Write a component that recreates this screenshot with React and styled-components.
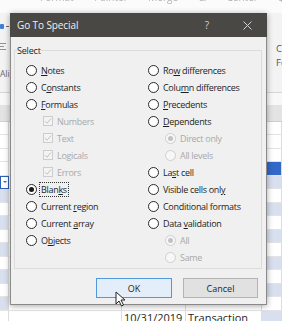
import React from "react";
import styled, { createGlobalStyle } from "styled-components";

const Global = createGlobalStyle`
  html, body { margin: 0; padding: 0; }
  body {
    width: 282px; height: 321px; overflow: hidden; background: #fff;
    font-family: "Open Sans", "Noto Sans", sans-serif;
  }
`;

const tones = {
  white: "#ffffff",
  light: "#d8dfee",
  blue: "#3268c8",
  gray: "#e4e4e4",
};

const Page = styled.div`
  position: relative;
  width: 282px;
  height: 321px;
  overflow: hidden;
  background: #fff;
  display: flex;
  flex-direction: column;
`;

/* ---------- Excel background ---------- */
const TopStrip = styled.div`
  height: 13px;
  flex: none;
  background: #fbfbfb;
  overflow: hidden;
`;
const TopText = styled.div`
  margin-top: -9px;
  padding-left: 40px;
  font-size: 10px;
  line-height: 12px;
  color: #b4b4b4;
  white-space: nowrap;
  word-spacing: 18px;
  filter: blur(0.6px);
`;
const Ribbon = styled.div`
  height: 79px;
  flex: none;
  background: #f3f3f3;
  border-bottom: 1px solid #d6d6d6;
  display: flex;
  justify-content: space-between;
  overflow: hidden;
`;
const RibbonLeft = styled.div`
  width: 10px;
  display: flex;
  flex-direction: column;
  padding-top: 9px;
`;
const BlueIcon = styled.div`
  display: flex;
  align-items: center;
  gap: 2px;
  height: 8px;
`;
const BlueTri = styled.div`
  width: 4px;
  height: 5px;
  background: #3f7fd3;
  border-radius: 1px;
`;
const Dash = styled.div`
  width: 3px;
  height: 1px;
  background: #666;
`;
const AlignLines = styled.div`
  margin-top: 13px;
  display: flex;
  flex-direction: column;
  gap: 2px;
  opacity: 0.7;
`;
const AlignLine = styled.div`
  width: ${(p) => p.$w}px;
  height: 1px;
  background: #6a6a6a;
`;
const RibbonLabel = styled.div`
  font-size: 8.5px;
  color: #6a6a6a;
  white-space: nowrap;
  margin-top: ${(p) => p.$mt}px;
  line-height: 11px;
`;
const RibbonRight = styled.div`
  width: 6px;
  display: flex;
  flex-direction: column;
  padding-top: 29px;
  overflow: hidden;
`;
const RibbonRightText = styled.div`
  font-size: 9.5px;
  color: #555;
  line-height: 14px;
  white-space: nowrap;
`;
const FormulaStrip = styled.div`
  height: 12px;
  flex: none;
  background: #f8f8f8;
`;
const HeaderRow = styled.div`
  height: 16.5px;
  flex: none;
  background: #e3e3e3;
  border-bottom: 1px solid #cfcfcf;
  box-sizing: border-box;
`;
const Row = styled.div`
  display: flex;
  height: 13.5px;
  flex: none;
`;
const Cell = styled.div`
  flex: ${(p) => (p.$grow ? "1 1 auto" : `0 0 ${p.$w}px`)};
  box-sizing: border-box;
  background: ${(p) => tones[p.$tone || "white"]};
  border-right: 1px solid #dcdcdc;
  border-bottom: 1px solid #e4e4e4;
  font-size: 11px;
  line-height: 14px;
  color: #1f1f1f;
  padding-left: 2px;
  white-space: nowrap;
  overflow: hidden;
`;
const SelCell = styled.div`
  flex: 0 0 9px;
  box-sizing: border-box;
  border: 1.5px solid #2d5fb5;
  background: #fff;
  display: flex;
  align-items: center;
  justify-content: flex-end;
`;
const DropTri = styled.div`
  width: 0;
  height: 0;
  border-left: 2px solid transparent;
  border-right: 2px solid transparent;
  border-top: 2px solid #666;
  margin-right: 1px;
`;

/* ---------- Dialog ---------- */
const Dialog = styled.div`
  position: absolute;
  left: 10px;
  top: 13px;
  width: 257px;
  height: 292px;
  box-sizing: border-box;
  background: #f0f0f0;
  border: 1px solid #8a8a8a;
  border-top: none;
  box-shadow: 0 1px 6px rgba(0, 0, 0, 0.35);
  display: flex;
  flex-direction: column;
`;
const TitleBar = styled.div`
  height: 24px;
  flex: none;
  margin: 0 -1px;
  background: #4a4845;
  color: #f0f0f0;
  display: flex;
  align-items: center;
`;
const Title = styled.div`
  flex: 1;
  padding-left: 7px;
  font-size: 10px;
  letter-spacing: -0.1px;
`;
const TitleButton = styled.div`
  width: 40px;
  height: 24px;
  display: flex;
  align-items: center;
  justify-content: center;
  font-size: 10px;
  color: #cfcfcf;
`;
const Body = styled.div`
  flex: 1;
  display: flex;
  flex-direction: column;
  padding: 6.5px 4px 6px 3px;
`;
const Group = styled.fieldset`
  margin: 0;
  padding: 0 3px 2px 2px;
  border: 1px solid #dcdcdc;
  min-width: 0;
`;
const Legend = styled.legend`
  padding: 0;
  font-size: 9px;
  line-height: 13px;
  color: #1e1e1e;
  letter-spacing: -0.2px;
`;
const Columns = styled.div`
  margin-top: 5px;
  padding-left: 9px;
  display: grid;
  grid-template-columns: 122px 1fr;
`;
const Column = styled.div`
  display: flex;
  flex-direction: column;
`;
const Option = styled.div`
  height: 17px;
  display: flex;
  align-items: center;
  gap: 4px;
  padding-left: ${(p) => (p.$indent ? 17 : 0)}px;
`;
const Radio = styled.div`
  width: 11px;
  height: 11px;
  box-sizing: border-box;
  border-radius: 50%;
  border: 1px solid ${(p) => (p.$disabled ? "#cfcfcf" : "#2a2a2a")};
  background: ${(p) => (p.$disabled ? "#f7f7f7" : "#fff")};
  display: flex;
  align-items: center;
  justify-content: center;
  flex: none;
  &::after {
    content: "";
    display: ${(p) => (p.$checked ? "block" : "none")};
    width: 5px;
    height: 5px;
    border-radius: 50%;
    background: ${(p) => (p.$disabled ? "#c2c2c2" : "#1a1a1a")};
  }
`;
const Check = styled.div`
  width: 10px;
  height: 10px;
  box-sizing: border-box;
  border: 1px solid #cdcdcd;
  background: #f3f3f3;
  display: flex;
  align-items: center;
  justify-content: center;
  flex: none;
`;
const Label = styled.span`
  font-size: 9px;
  letter-spacing: -0.3px;
  line-height: 11px;
  white-space: nowrap;
  color: ${(p) => (p.$disabled ? "#a9a9a9" : "#1e1e1e")};
  outline: ${(p) => (p.$focus ? "1px dotted #333" : "none")};
  outline-offset: 1px;
  & u {
    text-decoration: underline;
    text-underline-offset: 1px;
  }
`;
const Buttons = styled.div`
  margin-top: 9.5px;
  display: flex;
  justify-content: flex-end;
  gap: 11px;
  padding-right: 4px;
`;
const Button = styled.div`
  width: ${(p) => p.$w}px;
  height: 20px;
  box-sizing: border-box;
  display: flex;
  align-items: center;
  justify-content: center;
  font-size: 9px;
  color: #1e1e1e;
  background: ${(p) => (p.$default ? "#e3eefa" : "#e1e1e1")};
  border: 1px solid ${(p) => (p.$default ? "#4f98dc" : "#b4b4b4")};
`;
const Cursor = styled.svg`
  position: absolute;
  left: 115px;
  top: 291px;
`;

const Accel = ({ text, at }) => {
  if (at == null || at < 0) return text;
  return (
    <>
      {text.slice(0, at)}
      <u>{text[at]}</u>
      {text.slice(at + 1)}
    </>
  );
};

const left = [
  { t: "Notes", u: 0 },
  { t: "Constants", u: 1 },
  { t: "Formulas", u: 0 },
  { t: "Numbers", kind: "check", sub: true },
  { t: "Text", kind: "check", sub: true },
  { t: "Logicals", kind: "check", sub: true },
  { t: "Errors", kind: "check", sub: true },
  { t: "Blanks", u: 4, checked: true, focus: true },
  { t: "Current region", u: 8 },
  { t: "Current array", u: 8 },
  { t: "Objects", u: 1 },
];
const right = [
  { t: "Row differences", u: 2 },
  { t: "Column differences", u: 4 },
  { t: "Precedents", u: 0 },
  { t: "Dependents", u: 0 },
  { t: "Direct only", sub: true, checked: true },
  { t: "All levels", sub: true },
  { t: "Last cell", u: 2 },
  { t: "Visible cells only", u: 17 },
  { t: "Conditional formats" },
  { t: "Data validation", u: 5 },
  { t: "All", sub: true, checked: true },
  { t: "Same", sub: true },
];

const OptionItem = ({ o }) => (
  <Option $indent={o.sub}>
    {o.kind === "check" ? (
      <Check>
        <svg width="8" height="8" viewBox="0 0 8 8">
          <path d="M1 4.2 L3 6.2 L7 1.6" fill="none" stroke="#c2c2c2" strokeWidth="1" />
        </svg>
      </Check>
    ) : (
      <Radio $checked={o.checked} $disabled={o.sub} />
    )}
    <Label $disabled={o.sub} $focus={o.focus}>
      <Accel text={o.t} at={o.u} />
    </Label>
  </Option>
);

// [leftTone, rightTone, leftSelected]
const rows = [
  ["white", "white"],
  ["white", "white"],
  ["white", "white"],
  ["white", "blue"],
  ["white", "light", true],
  ["light", "white"],
  ["white", "light"],
  ["light", "white"],
  ["white", "light"],
  ["light", "white"],
  ["white", "light"],
  ["light", "white"],
  ["white", "light"],
  ["light", "white"],
];

export default function App() {
  return (
    <Page>
      <Global />
      <TopStrip>
        <TopText>Format Painter Merge &amp; Center $ % , Formatting Table Styles</TopText>
      </TopStrip>
      <Ribbon>
        <RibbonLeft>
          <BlueIcon>
            <BlueTri />
            <Dash />
          </BlueIcon>
          <AlignLines>
            <AlignLine $w={6} />
            <AlignLine $w={4} />
            <AlignLine $w={6} />
          </AlignLines>
          <RibbonLabel $mt={18}>Alig</RibbonLabel>
        </RibbonLeft>
        <RibbonRight>
          <RibbonRightText>Co</RibbonRightText>
          <RibbonRightText>Fo</RibbonRightText>
        </RibbonRight>
      </Ribbon>
      <FormulaStrip />
      <HeaderRow />
      {rows.map(([lt, rt, sel], i) => (
        <Row key={i}>
          {sel ? <SelCell><DropTri /></SelCell> : <Cell $w={9} $tone={lt} />}
          <Cell $w={113} />
          <Cell $w={64} />
          <Cell $w={76} />
          <Cell $grow $tone={rt} />
        </Row>
      ))}
      <Row>
        <Cell $w={9} />
        <Cell $w={113} />
        <Cell $w={64}>10/31/2019</Cell>
        <Cell $w={76}>Transaction</Cell>
        <Cell $grow $tone="light" />
      </Row>

      <Dialog>
        <TitleBar>
          <Title>Go To Special</Title>
          <TitleButton>?</TitleButton>
          <TitleButton>
            <svg width="9" height="9" viewBox="0 0 9 9">
              <path d="M0.5 0.5 L8.5 8.5 M8.5 0.5 L0.5 8.5" stroke="#d4d4d4" strokeWidth="1" />
            </svg>
          </TitleButton>
        </TitleBar>
        <Body>
          <Group>
            <Legend>Select</Legend>
            <Columns>
              <Column>
                {left.map((o) => (
                  <OptionItem key={o.t} o={o} />
                ))}
              </Column>
              <Column>
                {right.map((o) => (
                  <OptionItem key={o.t} o={o} />
                ))}
              </Column>
            </Columns>
          </Group>
          <Buttons>
            <Button $w={76} $default>OK</Button>
            <Button $w={75}>Cancel</Button>
          </Buttons>
        </Body>
      </Dialog>

      <Cursor width="11" height="16" viewBox="0 0 11 16">
        <path d="M1 1 L1 13 L4 10 L6.5 15 L8.5 14 L6 9 L10 9 Z" fill="#fff" stroke="#222" strokeWidth="1" strokeLinejoin="round" />
      </Cursor>
    </Page>
  );
}
